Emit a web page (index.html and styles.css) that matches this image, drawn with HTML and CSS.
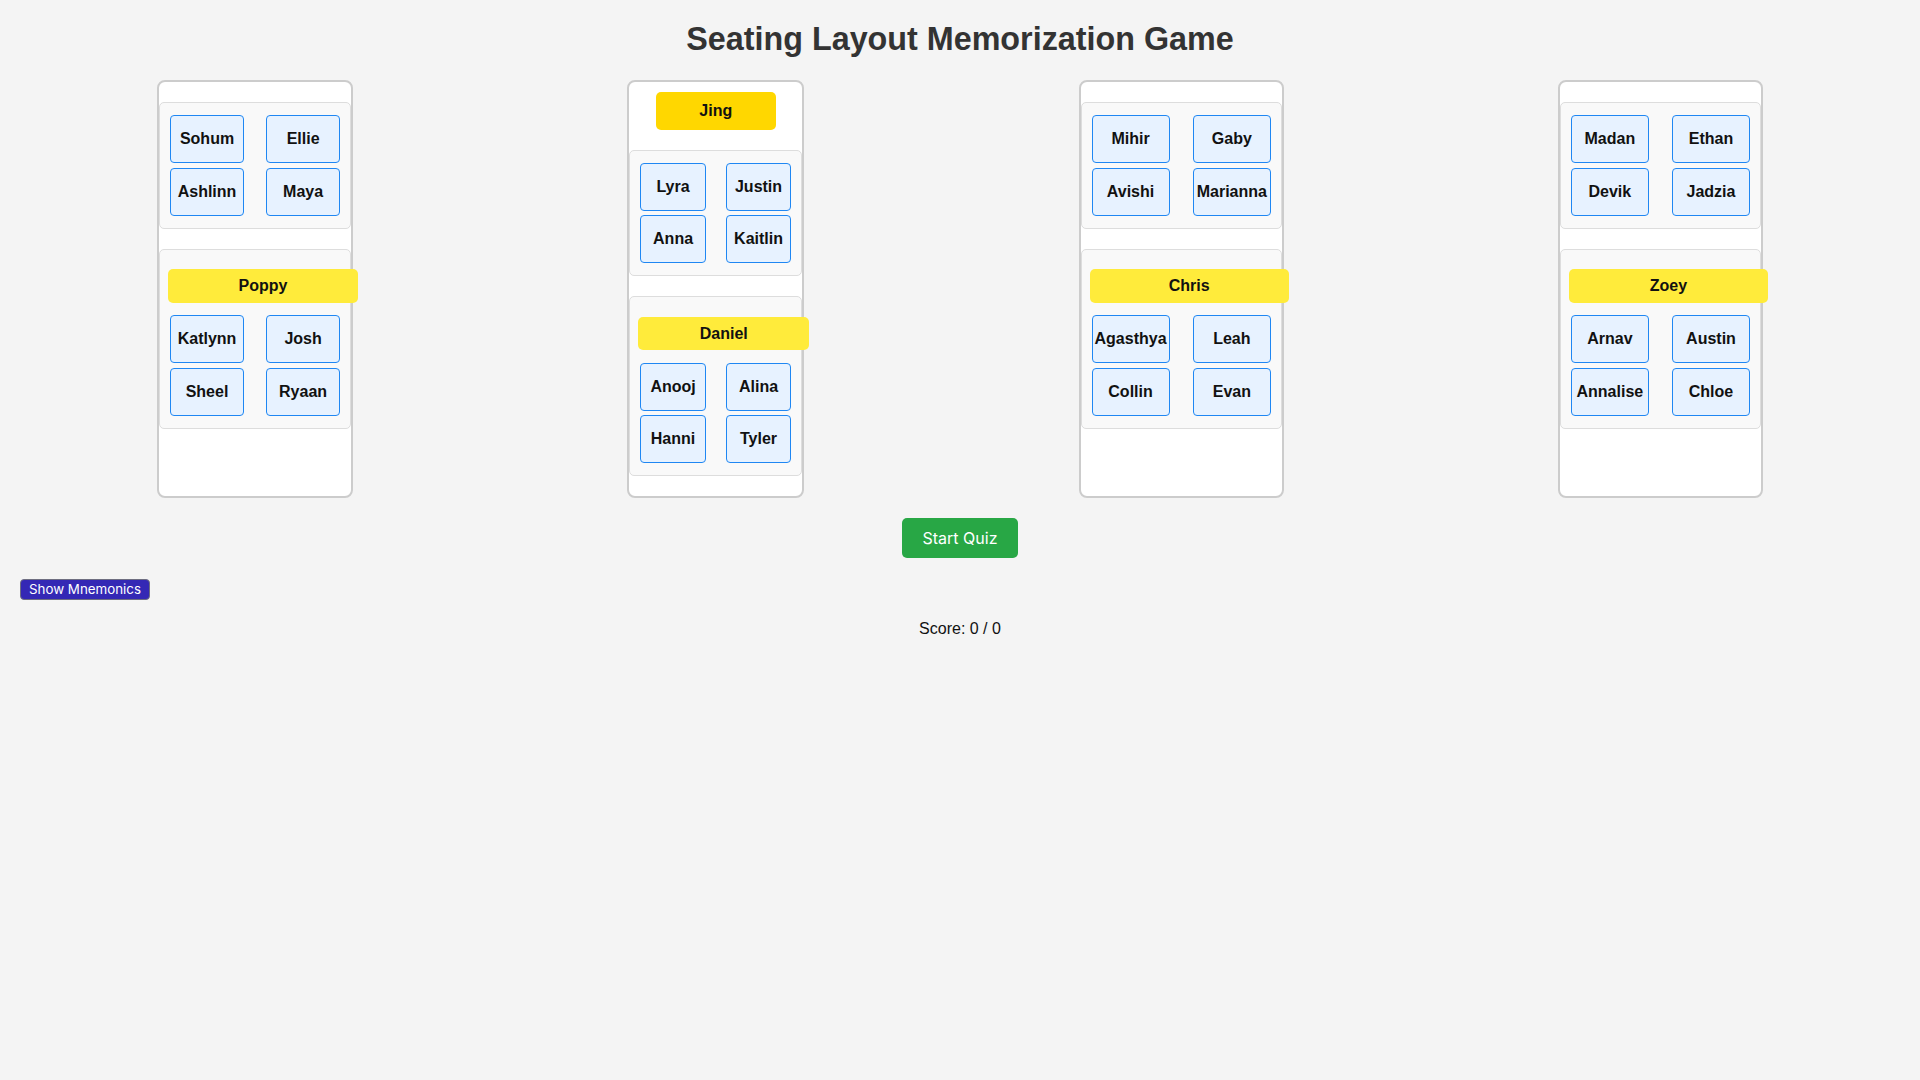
FILE: index.html
```html
<!DOCTYPE html>
<html lang="en">
<head>
<meta charset="utf-8">
<title>Seating Layout Memorization Game</title>
<link rel="stylesheet" href="styles.css">
</head>
<body>
<h1 class="title">Seating Layout Memorization Game</h1>

<div class="room">
  <div class="column col-1">
    <div class="pod">
      <div class="seats">
        <div class="seat">Sohum</div><div class="seat">Ellie</div>
        <div class="seat">Ashlinn</div><div class="seat">Maya</div>
      </div>
    </div>
    <div class="pod">
      <div class="teacher">Poppy</div>
      <div class="seats">
        <div class="seat">Katlynn</div><div class="seat">Josh</div>
        <div class="seat">Sheel</div><div class="seat">Ryaan</div>
      </div>
    </div>
  </div>

  <div class="column col-2">
    <div class="head-desk">Jing</div>
    <div class="pod">
      <div class="seats">
        <div class="seat">Lyra</div><div class="seat">Justin</div>
        <div class="seat">Anna</div><div class="seat">Kaitlin</div>
      </div>
    </div>
    <div class="pod">
      <div class="teacher">Daniel</div>
      <div class="seats">
        <div class="seat">Anooj</div><div class="seat">Alina</div>
        <div class="seat">Hanni</div><div class="seat">Tyler</div>
      </div>
    </div>
  </div>

  <div class="column col-3">
    <div class="pod">
      <div class="seats">
        <div class="seat">Mihir</div><div class="seat">Gaby</div>
        <div class="seat">Avishi</div><div class="seat">Marianna</div>
      </div>
    </div>
    <div class="pod">
      <div class="teacher">Chris</div>
      <div class="seats">
        <div class="seat">Agasthya</div><div class="seat">Leah</div>
        <div class="seat">Collin</div><div class="seat">Evan</div>
      </div>
    </div>
  </div>

  <div class="column col-4">
    <div class="pod">
      <div class="seats">
        <div class="seat">Madan</div><div class="seat">Ethan</div>
        <div class="seat">Devik</div><div class="seat">Jadzia</div>
      </div>
    </div>
    <div class="pod">
      <div class="teacher">Zoey</div>
      <div class="seats">
        <div class="seat">Arnav</div><div class="seat">Austin</div>
        <div class="seat">Annalise</div><div class="seat">Chloe</div>
      </div>
    </div>
  </div>
</div>

<div class="controls">
  <button class="btn-start" type="button">Start Quiz</button>
</div>

<div class="mnemonics">
  <button class="btn-mnemonics" type="button">Show Mnemonics</button>
</div>

<div class="score">Score: 0 / 0</div>
</body>
</html>
```

FILE: styles.css
```css
html, body {
  background: #f4f4f4;
}

body {
  margin: 0;
  padding: 0 20px;
  font-family: "Liberation Sans", Arial, sans-serif;
  color: #111;
}

.title {
  margin: 21px 0 22px;
  text-align: center;
  font-size: 32.3px;
  line-height: 37px;
  font-weight: bold;
  color: #333;
}

.room {
  display: flex;
  justify-content: space-around;
  align-items: stretch;
}

.column {
  box-sizing: border-box;
  background: #fff;
  border: 2px solid #ccc;
  border-radius: 8px;
}

.col-1 { width: 196px; }
.col-2 { width: 177.3px; }
.col-3 { width: 205.3px; }
.col-4 { width: 205px; }

.head-desk {
  width: 120px;
  height: 38px;
  margin: 9.5px auto 20px;
  background: #ffd700;
  border-radius: 5px;
  display: flex;
  align-items: center;
  justify-content: center;
  font-weight: bold;
  font-size: 16px;
  color: #111;
}

.pod {
  margin: 20px 0;
  padding: 10px;
  background: #f9f9f9;
  border: 1px solid #ddd;
  border-radius: 5px;
}

.teacher {
  box-sizing: border-box;
  width: calc(100% + 20px);
  height: 33.7px;
  margin: 9.7px 0 10.6px -2px;
  background: #ffeb3b;
  border-radius: 5px;
  display: flex;
  align-items: center;
  justify-content: center;
  font-weight: bold;
  font-size: 16px;
  color: #111;
}

.seats {
  display: grid;
  grid-template-columns: 43.5% 43.5%;
  justify-content: space-between;
  row-gap: 4.5px;
  padding: 2px 0;
}

.seat {
  box-sizing: border-box;
  height: 48px;
  background: #e7f2ff;
  border: 1px solid #1f87f3;
  border-radius: 4px;
  display: flex;
  align-items: center;
  justify-content: center;
  font-weight: bold;
  font-size: 16px;
  color: #111;
  white-space: nowrap;
}

.controls {
  margin-top: 20px;
  text-align: center;
}

.btn-start {
  font-family: Inter, "Noto Sans", sans-serif;
  font-size: 16px;
  line-height: 20px;
  padding: 10px 21px;
  border: none;
  border-radius: 5px;
  background: #28a745;
  color: #fff;
}

.mnemonics {
  margin-top: 21px;
}

.btn-mnemonics {
  font-family: Inter, "Noto Sans", sans-serif;
  font-size: 13.33px;
  line-height: 17px;
  padding: 1px 8px;
  border: 1px solid #6e6e80;
  border-radius: 4px;
  background: #3428b5;
  color: #fff;
}

.score {
  margin-top: 20px;
  text-align: center;
  font-size: 16px;
  line-height: 18px;
  color: #111;
}
```
